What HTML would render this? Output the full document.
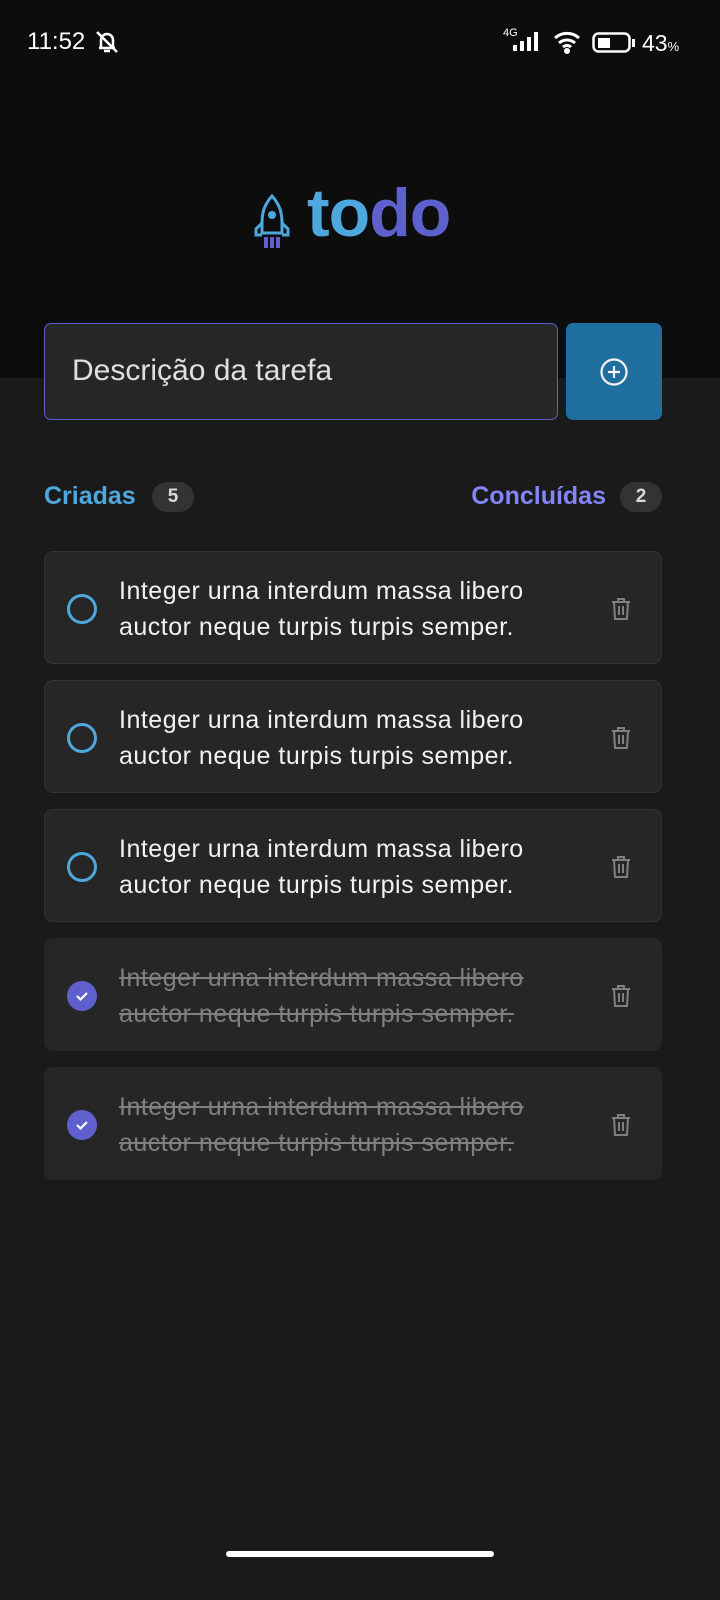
<!DOCTYPE html>
<html><head><meta charset="utf-8"><style>
*{margin:0;padding:0;box-sizing:border-box}
body{width:720px;height:1600px;background:#1a1a1a;font-family:"Liberation Sans",sans-serif;position:relative;overflow:hidden;color:#f2f2f2}
.hdr{position:absolute;left:0;top:0;width:720px;height:378px;background:#0d0d0d}
.abs{position:absolute}
.card{position:absolute;left:44px;width:618px;height:113px;background:#262626;border:1.5px solid #333;border-radius:9px}
.card.done{border-color:#262626}
.txt{position:absolute;left:74px;top:21px;font-size:25px;letter-spacing:0.5px;line-height:36px;color:#f2f2f2;white-space:nowrap}
.done .txt{color:#808080;text-decoration:line-through}
.circ{position:absolute;left:22px;top:42px;width:30px;height:30px;border:3px solid #4ea8de;border-radius:50%}
.chk{position:absolute;left:22px;top:42px;width:30px;height:30px;background:#5e60ce;border-radius:50%}
.trash{position:absolute;left:562px;top:43px}
</style></head><body>
<div class="hdr"></div>
<div class="abs" style="left:27px;top:28px;font-size:24px;color:#fff">11:52</div>
<svg class="abs" style="left:93px;top:28px" width="28" height="28" viewBox="0 0 28 28" fill="none" stroke="#fff" stroke-width="2.5"><path d="M8 20V12a6 6 0 0 1 12 0v8H6h16M11 23h6M4 4l20 20"/></svg>
<div class="abs" style="left:503px;top:27px;font-size:11px;color:#fff">4G</div>
<svg class="abs" style="left:513px;top:30px" width="32" height="22"><rect x="0" y="15" width="4" height="6" fill="#fff"/><rect x="7" y="11" width="4" height="10" fill="#fff"/><rect x="14" y="7" width="4" height="14" fill="#fff"/><rect x="21" y="2" width="4" height="19" fill="#fff"/></svg>
<svg class="abs" style="left:553px;top:30px" width="30" height="24" viewBox="0 0 30 24" fill="none" stroke="#fff" stroke-width="3"><path d="M2 8a18 18 0 0 1 24 0M6 13a12 12 0 0 1 16 0M10 17a6 6 0 0 1 8 0"/><circle cx="14" cy="21" r="1.5" fill="#fff"/></svg>
<svg class="abs" style="left:592px;top:32px" width="44" height="22"><rect x="1.5" y="1.5" width="36" height="18" rx="5" fill="none" stroke="#fff" stroke-width="2.5"/><rect x="6" y="6" width="12" height="10" fill="#fff"/><rect x="40" y="7" width="3" height="8" fill="#fff"/></svg>
<div class="abs" style="left:642px;top:30px;font-size:23px;color:#fff">43<span style="font-size:13px">%</span></div>

<svg class="abs" style="left:252px;top:193px" width="40" height="58" viewBox="0 0 40 58" fill="none"><path d="M20 3C12 12 10 20 10 30v10h20V30c0-10-2-18-10-27z" stroke="#4ea8de" stroke-width="3"/><circle cx="20" cy="22" r="4" fill="#4ea8de"/><path d="M10 30l-6 6v6h6M30 30l6 6v6h-6" stroke="#4ea8de" stroke-width="3"/><rect x="12" y="44" width="4" height="11" fill="#5e60ce"/><rect x="18" y="44" width="4" height="11" fill="#5e60ce"/><rect x="24" y="44" width="4" height="11" fill="#5e60ce"/></svg>
<div class="abs" style="left:307px;top:174px;font-size:68px;font-weight:900;letter-spacing:-1px"><span style="color:#4ea8de">to</span><span style="color:#5e60ce">do</span></div>

<div class="abs" style="left:44px;top:323px;width:514px;height:97px;background:#262626;border:1.5px solid #5e60ce;border-radius:7px"></div>
<div class="abs" style="left:72px;top:354px;font-size:30px;color:#e0e0e0">Descrição da tarefa</div>
<div class="abs" style="left:566px;top:323px;width:96px;height:97px;background:#1e6f9f;border-radius:7px"></div>
<svg class="abs" style="left:599px;top:357px" width="30" height="30" viewBox="0 0 30 30" fill="none" stroke="#f2f2f2" stroke-width="2.2"><circle cx="15" cy="15" r="12.5"/><path d="M15 9v12M9 15h12"/></svg>

<div class="abs" style="left:44px;top:482px;font-size:25px;font-weight:bold;color:#4ea8de">Criadas</div>
<div class="abs" style="left:152px;top:482px;width:42px;height:30px;border-radius:15px;background:#333;color:#d9d9d9;font-size:19px;font-weight:bold;text-align:center;line-height:30px">5</div>
<div class="abs" style="right:114px;top:482px;font-size:25px;font-weight:bold;color:#8284fa">Concluídas</div>
<div class="abs" style="left:620px;top:482px;width:42px;height:30px;border-radius:15px;background:#333;color:#d9d9d9;font-size:19px;font-weight:bold;text-align:center;line-height:30px">2</div>

<div class="card" style="top:551px"><div class="circ"></div><div class="txt">Integer urna interdum massa libero<br>auctor neque turpis turpis semper.</div><svg class="trash" width="28" height="28" viewBox="0 0 28 28" fill="none" stroke="#808080" stroke-width="2"><path d="M5 7h18M11 7V4h6v3M7 7l1 17h12l1-17M12 11v9M16 11v9"/></svg></div>
<div class="card" style="top:680px"><div class="circ"></div><div class="txt">Integer urna interdum massa libero<br>auctor neque turpis turpis semper.</div><svg class="trash" width="28" height="28" viewBox="0 0 28 28" fill="none" stroke="#808080" stroke-width="2"><path d="M5 7h18M11 7V4h6v3M7 7l1 17h12l1-17M12 11v9M16 11v9"/></svg></div>
<div class="card" style="top:809px"><div class="circ"></div><div class="txt">Integer urna interdum massa libero<br>auctor neque turpis turpis semper.</div><svg class="trash" width="28" height="28" viewBox="0 0 28 28" fill="none" stroke="#808080" stroke-width="2"><path d="M5 7h18M11 7V4h6v3M7 7l1 17h12l1-17M12 11v9M16 11v9"/></svg></div>
<div class="card done" style="top:938px"><div class="chk"><svg width="30" height="30" viewBox="0 0 30 30" fill="none" stroke="#fff" stroke-width="2.2"><path d="M10 15l3.5 3.5L20 12"/></svg></div><div class="txt">Integer urna interdum massa libero<br>auctor neque turpis turpis semper.</div><svg class="trash" width="28" height="28" viewBox="0 0 28 28" fill="none" stroke="#808080" stroke-width="2"><path d="M5 7h18M11 7V4h6v3M7 7l1 17h12l1-17M12 11v9M16 11v9"/></svg></div>
<div class="card done" style="top:1067px"><div class="chk"><svg width="30" height="30" viewBox="0 0 30 30" fill="none" stroke="#fff" stroke-width="2.2"><path d="M10 15l3.5 3.5L20 12"/></svg></div><div class="txt">Integer urna interdum massa libero<br>auctor neque turpis turpis semper.</div><svg class="trash" width="28" height="28" viewBox="0 0 28 28" fill="none" stroke="#808080" stroke-width="2"><path d="M5 7h18M11 7V4h6v3M7 7l1 17h12l1-17M12 11v9M16 11v9"/></svg></div>

<div class="abs" style="left:226px;top:1551px;width:268px;height:6px;border-radius:3px;background:#fff"></div>
</body></html>
